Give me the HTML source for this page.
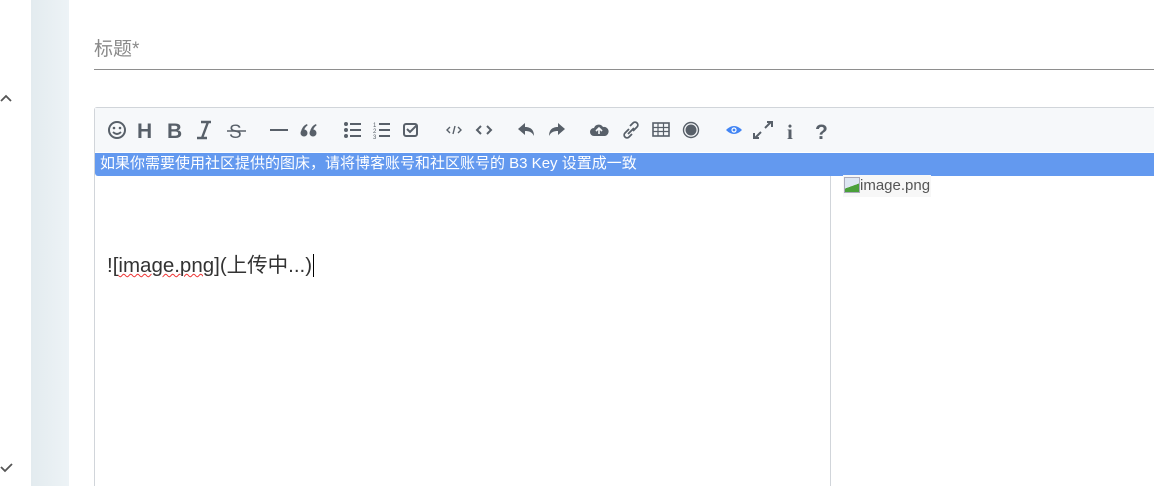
<!DOCTYPE html>
<html><head><meta charset="utf-8"><style>
*{margin:0;padding:0;box-sizing:border-box}
html,body{width:1154px;height:486px;overflow:hidden}
body{background:#fff;position:relative;font-family:"Liberation Sans","Noto Sans CJK SC",sans-serif}
.bar{position:absolute;left:31px;top:0;width:38px;height:486px;background:linear-gradient(90deg,#e3ebef,#edf3f6)}
.title{position:absolute;left:94px;top:34px;font-size:19px;color:#8a8a8a}
.tline{position:absolute;left:94px;top:69px;width:1060px;height:1px;background:#8e8e8e}
.ed{position:absolute;left:94px;top:107px;width:1070px;height:379px;border:1px solid #d1d5da;border-bottom:none;border-radius:3px 3px 0 0;background:#fff}
.tb{position:absolute;left:0;top:0;right:0;height:44px;background:#f6f8fa}
.ban{position:absolute;left:0;top:45px;right:0;height:23px;background:#6399ef;color:#fff;font-size:15px;line-height:22px;padding-left:5px;border-radius:0 0 0 3px;white-space:nowrap}
.div{position:absolute;left:735px;top:68px;width:1px;height:330px;background:#d1d5da}
.txt{position:absolute;left:12px;top:140px;font-size:20.5px;color:#333;white-space:nowrap}
.sq{text-decoration:underline wavy #e33;text-decoration-thickness:1px}
.img{position:absolute;left:748px;top:67px;font-size:15px;color:#555;background:#f7f7f7;padding:0 1px;line-height:22px}
</style></head><body>
<div class="bar"></div>
<svg style="position:absolute;left:0;top:92px" width="14" height="12"><path d="M1 9l5-5 5 5" stroke="#555" stroke-width="1.8" fill="none"/></svg>
<svg style="position:absolute;left:0;top:462px" width="14" height="12"><path d="M1 5l4 4 7-7" stroke="#555" stroke-width="1.8" fill="none"/></svg>
<div class="title">标题*</div>
<div class="tline"></div>
<div class="ed">
<div class="tb">
<svg width="1060" height="44" style="position:absolute;left:0;top:0" fill="#586069" stroke="#586069">
<g transform="translate(-94,-107)">
<circle cx="116" cy="129" r="8" fill="none" stroke-width="2"/><circle cx="113" cy="127" r="1.3" stroke="none"/><circle cx="119" cy="127" r="1.3" stroke="none"/><path d="M112 131q4 4 8 0" fill="none" stroke-width="1.8"/>
<text x="136" y="137" font-size="21" font-weight="bold" stroke="none" font-family="Liberation Sans">H</text>
<text x="166" y="137" font-size="21" font-weight="bold" stroke="none" font-family="Liberation Sans">B</text>
<path d="M200 121h10M196 137h10M207 121l-6 16" fill="none" stroke-width="2.4"/>
<text x="228" y="137" font-size="19" stroke="none" font-family="Liberation Sans">S</text><path d="M226 130h19" stroke-width="1.5"/>
<path d="M269 129h18" stroke-width="2"/>
<g stroke="none"><circle cx="303" cy="132" r="3.5"/><path d="M300 131q1-6 6-8l0.6 1.4q-3 2-3.5 5z"/><circle cx="312" cy="132" r="3.5"/><path d="M309 131q1-6 6-8l0.6 1.4q-3 2-3.5 5z"/></g>
<g stroke="none"><circle cx="345" cy="123" r="2"/><circle cx="345" cy="129" r="2"/><circle cx="345" cy="135" r="2"/><rect x="349" y="122" width="11" height="2"/><rect x="349" y="128" width="11" height="2"/><rect x="349" y="134" width="11" height="2"/>
<text x="372" y="126" font-size="6">1</text><text x="372" y="132" font-size="6">2</text><text x="372" y="138" font-size="6">3</text><rect x="378" y="122" width="11" height="2"/><rect x="378" y="128" width="11" height="2"/><rect x="378" y="134" width="11" height="2"/></g>
<rect x="403" y="123" width="13" height="12" rx="2" fill="none" stroke-width="2"/><path d="M406 128l3 3 7-7" fill="none" stroke-width="2"/>
<path d="M449 126l-3 3 3 3M457 126l3 3-3 3M454 125l-2 8" fill="none" stroke-width="1.4"/>
<path d="M480 125l-4 4 4 4M486 125l4 4-4 4" fill="none" stroke-width="2"/>
<path d="M524 122l-7 6 7 6v-4c4 0 7 1 9 5 0-6-3-9-9-9z" stroke="none"/>
<path d="M557 122l7 6-7 6v-4c-4 0-7 1-9 5 0-6 3-9 9-9z" stroke="none"/>
<path d="M593 135a4 4 0 0 1 0-8a5 5 0 0 1 9-1a4 4 0 0 1 2 9z" stroke="none"/><path d="M598 133v-5M595 130l3-3 3 3" stroke="#f6f8fa" stroke-width="1.6" fill="none"/>
<path d="M628 128l-4 4a2.5 2.5 0 0 0 4 4l3-3M632 130l4-4a2.5 2.5 0 0 0-4-4l-3 3M627 133l6-6" fill="none" stroke-width="1.8"/>
<rect x="652" y="122" width="16" height="13" fill="none" stroke-width="1.6"/><path d="M652 126.5h16M652 130.5h16M657 122v13M662.5 122v13" stroke-width="1.2"/>
<circle cx="690" cy="129" r="7.5" fill="none" stroke-width="1.4"/><circle cx="690" cy="129" r="5.5" stroke="none"/>
<path d="M725 129q8-8 16 0q-8 8-16 0z" fill="#4285f4" stroke="none"/><circle cx="733" cy="129" r="2.6" fill="#fff" stroke="none"/><circle cx="733" cy="129" r="1.4" fill="#4285f4" stroke="none"/>
<path d="M764 127l6-6M766 121h5v5M760 131l-6 6M753 132v5h5" fill="none" stroke-width="2"/>
<text x="786" y="138" font-size="21" font-weight="bold" stroke="none" font-family="Liberation Serif">i</text>
<text x="814" y="138" font-size="21" font-weight="bold" stroke="none" font-family="Liberation Sans">?</text>
</g></svg>
</div>
<div class="ban">如果你需要使用社区提供的图床，请将博客账号和社区账号的 B3 Key 设置成一致</div>
<div class="div"></div>
<div class="txt">![<span class="sq">image.png</span>](上传中...)<span style="border-left:1px solid #000;margin-left:1px"></span></div>
<div class="img"><span style="display:inline-block;width:16px;height:16px;vertical-align:-3px;background:linear-gradient(160deg,#dde6f2 55%,#4aa03a 56%);border:1px solid #aab"></span>image.png</div>
</div>
</body></html>
